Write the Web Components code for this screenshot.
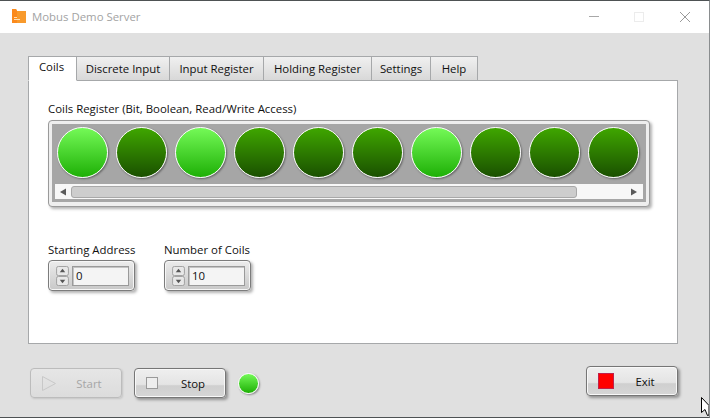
<!DOCTYPE html>
<html>
<head>
<meta charset="utf-8">
<title>Mobus Demo Server</title>
<style>
  html, body {
    margin: 0;
    padding: 0;
    height: 418px;
    overflow: hidden;
    font-family: "Open Sans", "Noto Sans", sans-serif;
    font-size: 11.4px;
  }
</style>
</head>
<body>
<demo-window>
  <title-bar slot="title">Mobus Demo Server</title-bar>
  <tab-strip slot="tabs">
    <tab-item active style="width:49px">Coils</tab-item>
    <tab-item style="width:93px">Discrete Input</tab-item>
    <tab-item style="width:94px">Input Register</tab-item>
    <tab-item style="width:108px">Holding Register</tab-item>
    <tab-item style="width:59px">Settings</tab-item>
    <tab-item style="width:47px">Help</tab-item>
  </tab-strip>
  <coils-panel slot="panel"></coils-panel>
  <action-bar slot="actions"></action-bar>
</demo-window>

<script>
class DemoWindow extends HTMLElement {
  constructor() {
    super();
    this.attachShadow( {mode: 'open'} );
    this.shadowRoot.innerHTML = `
      <style>
        :host {
          background: #e0e0e0;
          border-bottom: solid 1px #4e5254;
          border-right: solid 1px #8a8d8f;
          border-top: solid 1px #4e5254;
          box-sizing: border-box;
          display: flex;
          flex-direction: column;
          height: 418px;
          position: relative;
          width: 710px;
        }
        main {
          display: flex;
          flex-direction: column;
          padding: 23px 31px 0 28px;
        }
        .pointer {
          height: 20px;
          position: absolute;
          right: 0;
          top: 396px;
          width: 8px;
        }
      </style>
      <slot name="title"></slot>
      <main>
        <slot name="tabs"></slot>
        <slot name="panel"></slot>
        <slot name="actions"></slot>
      </main>
      <svg class="pointer" viewBox="0 0 8 20">
        <path d="M0.5 0.5 V15.5 L4 12.5 L6.5 18.5 L8 18 V11 L8 8.5 Z" fill="#fff" stroke="#000" stroke-width="1"/>
      </svg>
    `;
  }
}

class TitleBar extends HTMLElement {
  constructor() {
    super();
    this.attachShadow( {mode: 'open'} );
    this.shadowRoot.innerHTML = `
      <style>
        :host {
          align-items: center;
          background: #ffffff;
          box-sizing: border-box;
          color: #a3a3a3;
          display: flex;
          flex: none;
          height: 32px;
          padding: 0 0 2px 12px;
        }
        .folder {
          margin-right: 6px;
        }
        .name {
          flex: 1;
          font-size: 11.4px;
        }
        .controls {
          align-items: center;
          display: flex;
          margin-top: 1px;
        }
        .controls svg {
          display: block;
          height: 12px;
          width: 12px;
        }
        .min { margin-right: 33px; }
        .max { margin-right: 34px; }
        .close { margin-right: 18px; }
      </style>
      <svg class="folder" width="14" height="14" viewBox="0 0 14 14">
        <path d="M0 0 H4 L5 2 H14 V14 H0 Z" fill="#f89a2c"/>
        <path d="M0 0 H4 L5 2 V14 H0 Z" fill="#fb8a1c"/>
        <path d="M2 8 H5 V9 H2 Z M2 10 H8 V11 H2 Z" fill="#fde0b4"/>
      </svg>
      <span class="name"><slot></slot></span>
      <div class="controls">
        <svg class="min" viewBox="0 0 12 12"><path d="M1 5.5 H11" stroke="#a8a8a8" stroke-width="1"/></svg>
        <svg class="max" viewBox="0 0 12 12"><rect x="1.5" y="1.5" width="9" height="9" fill="none" stroke="#ececec"/></svg>
        <svg class="close" viewBox="0 0 12 12"><path d="M1 1 L11 11 M11 1 L1 11" stroke="#9a9a9a" stroke-width="1"/></svg>
      </div>
    `;
  }
}

class TabStrip extends HTMLElement {
  constructor() {
    super();
    this.attachShadow( {mode: 'open'} );
    this.shadowRoot.innerHTML = `
      <style>
        :host {
          align-items: flex-end;
          display: flex;
          height: 25px;
          margin-bottom: -1px;
          position: relative;
          z-index: 1;
        }
      </style>
      <slot></slot>
    `;
  }
}

class TabItem extends HTMLElement {
  constructor() {
    super();
    this.attachShadow( {mode: 'open'} );
    this.shadowRoot.innerHTML = `
      <style>
        :host {
          background: linear-gradient( #f0f0f0, #d8d8d8 );
          border: solid 1px #a6a8aa;
          border-left: none;
          box-sizing: border-box;
          color: #101010;
          display: block;
          flex: none;
          height: 25px;
          line-height: 24px;
          text-align: center;
          white-space: nowrap;
        }
        :host( [active] ) {
          background: #ffffff;
          border-bottom-color: #ffffff;
          border-left: solid 1px #a6a8aa;
          line-height: 20px;
          padding-right: 2px;
        }
      </style>
      <slot></slot>
    `;
  }
}

class LedLamp extends HTMLElement {
  constructor() {
    super();
    this.attachShadow( {mode: 'open'} );
    this.shadowRoot.innerHTML = `
      <style>
        :host {
          background: linear-gradient( #3fa600, #1a5000 );
          border: solid 1.5px #ffffff;
          border-radius: 50%;
          box-shadow: 1px 1px 2px rgba( 0, 0, 0, 0.4 );
          box-sizing: border-box;
          display: block;
          flex: none;
          height: var( --lamp-size, 51px );
          width: var( --lamp-size, 51px );
        }
        :host( [on] ) {
          background: linear-gradient( #74f957, #1eb006 );
        }
      </style>
    `;
  }
}

class CoilsPanel extends HTMLElement {
  constructor() {
    super();
    this.attachShadow( {mode: 'open'} );
    const states = [1, 0, 1, 0, 0, 0, 1, 0, 0, 0];
    const lamps = states.map( ( on ) => `<led-lamp ${on ? 'on' : ''}></led-lamp>` ).join( '' );
    this.shadowRoot.innerHTML = `
      <style>
        :host {
          background: #ffffff;
          border: solid 1px #a6a8aa;
          box-sizing: border-box;
          color: #101010;
          display: block;
          height: 264px;
          padding: 20px 19px 0;
        }
        label {
          display: block;
          height: 19px;
          line-height: 16px;
          white-space: nowrap;
        }
        .array {
          background: #eeeeee;
          border: solid 1px #9a9a9a;
          border-radius: 4px;
          box-shadow: 2px 2px 3px rgba( 0, 0, 0, 0.3 );
          box-sizing: border-box;
          height: 87px;
          padding: 3px 3px 4px;
          width: 602px;
        }
        .well {
          background: #a6a6a6;
          display: flex;
          flex-direction: column;
          height: 78px;
        }
        .lamps {
          display: flex;
          gap: 8px;
          height: 60px;
          padding: 3px 0 0 5px;
          box-sizing: border-box;
        }
        .scroll {
          align-items: center;
          background: #f7f7f7;
          display: flex;
          height: 15px;
          justify-content: space-between;
          margin: 0 3px;
          padding: 0 5px 0 4px;
        }
        .thumb {
          background: #cdcdcd;
          border: solid 1px #a8a8a8;
          border-radius: 3px;
          box-sizing: border-box;
          flex: none;
          height: 12px;
          margin-left: 1px;
          width: 506px;
        }
        .numbers {
          display: flex;
          gap: 29px;
          margin-top: 34px;
        }
      </style>
      <label>Coils Register (Bit, Boolean, Read/Write Access)</label>
      <div class="array">
        <div class="well">
          <div class="lamps">${lamps}</div>
          <div class="scroll">
            <svg width="8" height="8" viewBox="0 0 8 8"><path d="M1 4 L7 0.5 V7.5 Z" fill="#5a5a5a"/></svg>
            <div class="thumb"></div>
            <svg width="8" height="8" viewBox="0 0 8 8" style="margin-left:50px"><path d="M7 4 L1 0.5 V7.5 Z" fill="#5a5a5a"/></svg>
          </div>
        </div>
      </div>
      <div class="numbers">
        <num-control label="Starting Address" value="0"></num-control>
        <num-control label="Number of Coils" value="10"></num-control>
      </div>
    `;
  }
}

class NumControl extends HTMLElement {
  constructor() {
    super();
    this.attachShadow( {mode: 'open'} );
    this.shadowRoot.innerHTML = `
      <style>
        :host {
          display: block;
          width: 87px;
        }
        span {
          display: block;
          height: 19px;
          line-height: 17px;
          white-space: nowrap;
        }
        .frame {
          align-items: center;
          background: linear-gradient( #ececec, #c8c8c8 );
          border: solid 1px #7c7c7c;
          border-radius: 4px;
          box-shadow: 2px 2px 3px rgba( 0, 0, 0, 0.3 ), inset 0 0 0 1px #f6f6f6;
          box-sizing: border-box;
          display: flex;
          gap: 3px;
          height: 31px;
          padding: 0 5px 0 7px;
        }
        .spin {
          display: flex;
          flex-direction: column;
          flex: none;
          height: 20px;
          width: 13px;
        }
        .spin svg {
          display: block;
          flex: 1;
        }
        .field {
          background: #f4f4f4;
          border: solid 1px #9a9a9a;
          box-shadow: inset 1px 1px 0 #c4c4c4;
          box-sizing: border-box;
          color: #101010;
          flex: 1;
          height: 20px;
          line-height: 18px;
          padding-left: 3px;
        }
      </style>
      <span></span>
      <div class="frame">
        <div class="spin">
          <svg viewBox="0 0 14 11"><rect x="0.5" y="0.5" width="13" height="10" rx="2" fill="#e8e8e8" stroke="#9a9a9a"/><path d="M7 3 L10 7 H4 Z" fill="#555"/></svg>
          <svg viewBox="0 0 14 11"><rect x="0.5" y="0.5" width="13" height="10" rx="2" fill="#e8e8e8" stroke="#9a9a9a"/><path d="M7 8 L10 4 H4 Z" fill="#555"/></svg>
        </div>
        <div class="field"></div>
      </div>
    `;
    this.shadowRoot.querySelector( 'span' ).textContent = this.getAttribute( 'label' );
    this.shadowRoot.querySelector( '.field' ).textContent = this.getAttribute( 'value' );
  }
}

class PushButton extends HTMLElement {
  constructor() {
    super();
    this.attachShadow( {mode: 'open'} );
    this.shadowRoot.innerHTML = `
      <style>
        :host {
          align-items: center;
          background: linear-gradient( #efefef 0%, #e4e4e4 55%, #cfcfcf 60%, #d6d6d6 100% );
          border: solid 1px #767676;
          border-radius: 4px;
          box-shadow: 2px 2px 3px rgba( 0, 0, 0, 0.35 ), inset 0 0 0 1px #f8f8f8;
          box-sizing: border-box;
          color: #101010;
          display: flex;
          flex: none;
          height: 30px;
          padding-left: 11px;
          width: 92px;
        }
        :host( [disabled] ) {
          background: linear-gradient( #e6e6e6, #dcdcdc );
          border-color: #bcbcbc;
          box-shadow: 1px 1px 2px rgba( 0, 0, 0, 0.12 );
          color: #a6a6a6;
        }
        .icon {
          display: flex;
          flex: none;
          width: 25px;
        }
        .text {
          flex: 1;
          padding-right: 10px;
          text-align: center;
        }
      </style>
      <span class="icon"><slot name="icon"></slot></span>
      <span class="text"><slot></slot></span>
    `;
  }
}

class ActionBar extends HTMLElement {
  constructor() {
    super();
    this.attachShadow( {mode: 'open'} );
    this.shadowRoot.innerHTML = `
      <style>
        :host {
          align-items: center;
          display: flex;
          height: 30px;
          margin-top: 24px;
          padding-left: 2px;
          --lamp-size: 21px;
        }
        .stop { margin-left: 12px; }
        led-lamp { margin-left: 12px; }
        .exit {
          margin-left: auto;
          margin-top: -4px;
        }
      </style>
      <push-button disabled>
        <svg slot="icon" width="14" height="15" viewBox="0 0 14 15"><path d="M0.5 0.5 L13.5 7.5 L0.5 14.5 Z" fill="none" stroke="#c8c8c8"/></svg>
        Start
      </push-button>
      <push-button class="stop">
        <svg slot="icon" width="12" height="12" viewBox="0 0 12 12"><rect x="0.5" y="0.5" width="11" height="11" fill="#eeeeee" stroke="#9a9a9a"/></svg>
        Stop
      </push-button>
      <led-lamp on></led-lamp>
      <push-button class="exit">
        <svg slot="icon" width="16" height="16" viewBox="0 0 16 16"><rect x="0.5" y="0.5" width="15" height="15" fill="#ff0000" stroke="#c0204a"/></svg>
        Exit
      </push-button>
    `;
  }
}

window.customElements.define( 'demo-window', DemoWindow );
window.customElements.define( 'title-bar', TitleBar );
window.customElements.define( 'tab-strip', TabStrip );
window.customElements.define( 'tab-item', TabItem );
window.customElements.define( 'led-lamp', LedLamp );
window.customElements.define( 'coils-panel', CoilsPanel );
window.customElements.define( 'num-control', NumControl );
window.customElements.define( 'push-button', PushButton );
window.customElements.define( 'action-bar', ActionBar );
</script>
</body>
</html>
